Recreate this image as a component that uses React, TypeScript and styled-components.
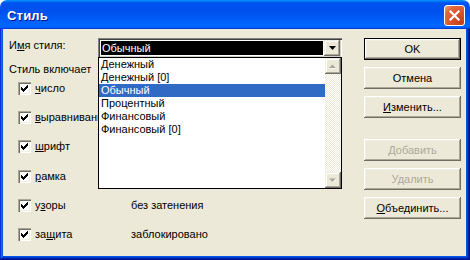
import React from 'react';
import styled, { createGlobalStyle } from 'styled-components';

const GlobalStyle = createGlobalStyle`
  html, body {
    margin: 0;
    padding: 0;
    background: #ffffff;
  }
  body {
    font-family: 'Liberation Sans', Arial, sans-serif;
    font-size: 11px;
    line-height: 13px;
    color: #000000;
  }
`;

const styleNames = [
  'Денежный',
  'Денежный [0]',
  'Обычный',
  'Процентный',
  'Финансовый',
  'Финансовый [0]',
];

type Option = {
  pre: string;
  key: string;
  post: string;
  value?: string;
};

// what the style includes: label with access key, and its value
const options: Option[] = [
  { pre: '', key: 'ч', post: 'исло' },
  { pre: '', key: 'в', post: 'ыравнивание' },
  { pre: '', key: 'ш', post: 'рифт' },
  { pre: '', key: 'р', post: 'амка' },
  { pre: 'у', key: 'з', post: 'оры', value: 'без затенения' },
  { pre: 'за', key: 'щ', post: 'ита', value: 'заблокировано' },
];

export default function App() {
  return (
    <>
      <GlobalStyle />
      <Window>
        <TitleBar>
          <Title>Стиль</Title>
          <CloseButton>
            <svg width="13" height="13" viewBox="0 0 13 13">
              <path d="M2.5 2.5 L10.5 10.5 M10.5 2.5 L2.5 10.5" stroke="#fff" strokeWidth="2.2" strokeLinecap="square" />
            </svg>
          </CloseButton>
        </TitleBar>
        <Frame>
          <Body>
            <LeftPane>
              <NameRow>
                <Label>
                  И<u>м</u>я стиля:
                </Label>
                <Combo>
                  <ComboText>
                    <Selected>Обычный</Selected>
                  </ComboText>
                  <DropButton>
                    <svg width="7" height="4" viewBox="0 0 7 4">
                      <path d="M0 0h7L3.5 4z" fill="#000" />
                    </svg>
                  </DropButton>
                </Combo>
              </NameRow>
              <SectionLabel>Стиль включает</SectionLabel>
              <CheckGrid>
                {options.map((o) => (
                  <React.Fragment key={o.key + o.post}>
                    <CheckBox>
                      <svg width="13" height="13" viewBox="0 0 13 13" shapeRendering="crispEdges">
                        <path
                          d="M9 3h1v1h-1z M8 4h2v1h-2z M3 5h1v1h-1z M7 5h3v1h-3z M3 6h2v1h-2z M6 6h3v1h-3z M3 7h5v1h-5z M4 8h3v1h-3z M5 9h1v1h-1z"
                          fill="#000"
                        />
                      </svg>
                    </CheckBox>
                    <CheckLabel>
                      {o.pre}
                      <u>{o.key}</u>
                      {o.post}
                    </CheckLabel>
                    <CheckValue>{o.value ?? ''}</CheckValue>
                  </React.Fragment>
                ))}
              </CheckGrid>
              <DropList>
                <Items>
                  {styleNames.map((name) => (
                    <Item key={name} active={name === 'Обычный'}>
                      {name}
                    </Item>
                  ))}
                </Items>
                <ScrollBar>
                  <ScrollButton>
                    <svg width="8" height="5" viewBox="0 0 8 5">
                      <path d="M1 4.5h7L4.5 1z" fill="#fff" />
                      <path d="M0 4h7L3.5 0.5z" fill="#ACA899" />
                    </svg>
                  </ScrollButton>
                  <Track />
                  <ScrollButton>
                    <svg width="8" height="5" viewBox="0 0 8 5">
                      <path d="M1 1h7L4.5 4.5z" fill="#fff" />
                      <path d="M0 0.5h7L3.5 4z" fill="#ACA899" />
                    </svg>
                  </ScrollButton>
                </ScrollBar>
              </DropList>
            </LeftPane>
            <Buttons>
              <Button isDefault>OK</Button>
              <Button>Отмена</Button>
              <Button>
                <u>И</u>зменить...
              </Button>
              <Button disabled gapTop>
                Добавить
              </Button>
              <Button disabled>Удалить</Button>
              <Button>
                <u>О</u>бъединить...
              </Button>
            </Buttons>
          </Body>
        </Frame>
      </Window>
    </>
  );
}

const Window = styled.div`
  width: 470px;
  height: 260px;
  display: flex;
  flex-direction: column;
`;

const TitleBar = styled.div`
  height: 29px;
  flex: none;
  display: flex;
  align-items: flex-start;
  padding: 0 5px 0 7px;
  box-sizing: border-box;
  border-radius: 7px 7px 0 0;
  background: linear-gradient(
    180deg,
    #0997ff,
    #0053ee 10%,
    #0050ee 40%,
    #0066ff 86%,
    #0066ff 92%,
    #005bff 95%,
    #003dd7 97%,
    #003dd7
  );
`;

const Title = styled.span`
  margin-top: 8px;
  font-family: 'Liberation Sans', Arial, sans-serif;
  font-weight: bold;
  font-size: 13px;
  line-height: 15px;
  color: #ffffff;
  text-shadow: 1px 1px #0f1089;
  letter-spacing: 0.2px;
`;

const CloseButton = styled.div`
  margin-left: auto;
  margin-top: 5px;
  width: 21px;
  height: 21px;
  box-sizing: border-box;
  border: 1px solid #ffffff;
  border-radius: 3px;
  display: flex;
  align-items: center;
  justify-content: center;
  background: radial-gradient(circle at 85% 85%, #c4401a 0%, #d9542d 45%, #e2683f 75%, #f2a585 100%);
`;

const Frame = styled.div`
  flex: 1;
  display: flex;
  padding: 0 4px 4px 3px;
  background: #0055e5;
  box-shadow: inset -1px -1px #00138c, inset 1px 0 #0831d9, inset -2px -2px #001ea0, inset 2px 0 #166aee,
    inset -3px -3px #003bda, inset 3px 0 #0855dd;
`;

const Body = styled.div`
  flex: 1;
  display: flex;
  gap: 22px;
  padding: 9px 5px 0 6px;
  background: #ece9d8;
`;

const LeftPane = styled.div`
  position: relative;
  width: 333px;
  display: flex;
  flex-direction: column;
`;

const NameRow = styled.div`
  display: flex;
  height: 20px;
`;

const Label = styled.div`
  width: 89px;
  padding-top: 1px;
  white-space: nowrap;
`;

const Combo = styled.div`
  width: 244px;
  height: 20px;
  box-sizing: border-box;
  padding: 2px;
  display: flex;
  background: #ffffff;
  box-shadow: inset 1px 1px #7f7f7f, inset 2px 2px #404040, inset -1px -1px #ffffff, inset -2px -2px #d4d0c8;
`;

const ComboText = styled.div`
  flex: 1;
  padding: 0 1px;
  display: flex;
  align-items: center;
`;

const Selected = styled.div`
  flex: 1;
  height: 14px;
  line-height: 14px;
  padding-left: 1px;
  background: #000000;
  color: #ffffff;
`;

const DropButton = styled.div`
  width: 16px;
  height: 16px;
  display: flex;
  align-items: center;
  justify-content: center;
  background: #ece9d8;
  box-shadow: inset -1px -1px #716f64, inset 1px 1px #f1efe2, inset -2px -2px #aca899, inset 2px 2px #ffffff;
`;

const SectionLabel = styled.div`
  margin-top: 5px;
  white-space: nowrap;
`;

const CheckGrid = styled.div`
  margin-top: 6px;
  padding-left: 9px;
  display: grid;
  grid-template-columns: 13px 92px auto;
  grid-auto-rows: 13px;
  column-gap: 4px;
  row-gap: 16.2px;
  align-items: center;
`;

const CheckBox = styled.span`
  width: 13px;
  height: 13px;
  display: block;
  background: #ffffff;
  box-shadow: inset 1px 1px #aca899, inset 2px 2px #716f64, inset -1px -1px #ffffff, inset -2px -2px #f1efe2;
  svg {
    display: block;
  }
`;

const CheckLabel = styled.span`
  white-space: nowrap;
`;

const CheckValue = styled.span`
  white-space: nowrap;
`;

// the open drop-down list lies over the labels below the combo box
const DropList = styled.div`
  position: absolute;
  left: 89px;
  top: 19px;
  width: 244px;
  height: 132px;
  box-sizing: border-box;
  border: 1px solid #000000;
  background: #ffffff;
  display: flex;
`;

const Items = styled.div`
  flex: 1;
  display: flex;
  flex-direction: column;
`;

const Item = styled.div<{ active?: boolean }>`
  height: 13px;
  line-height: 13px;
  padding-left: 2px;
  white-space: nowrap;
  background: ${(p) => (p.active ? '#316ac5' : 'transparent')};
  color: ${(p) => (p.active ? '#ffffff' : '#000000')};
`;

const ScrollBar = styled.div`
  width: 16px;
  display: flex;
  flex-direction: column;
`;

const ScrollButton = styled.div`
  width: 16px;
  height: 16px;
  flex: none;
  display: flex;
  align-items: center;
  justify-content: center;
  background: #ece9d8;
  box-shadow: inset -1px -1px #716f64, inset 1px 1px #f1efe2, inset -2px -2px #aca899, inset 2px 2px #ffffff;
`;

const Track = styled.div`
  flex: 1;
  background: repeating-conic-gradient(#ffffff 0 25%, #ece9d8 0 50%) 0 0 / 2px 2px;
`;

const Buttons = styled.div`
  width: 97px;
  display: flex;
  flex-direction: column;
  gap: 7px;
`;

const Button = styled.div<{ isDefault?: boolean; disabled?: boolean; gapTop?: boolean }>`
  height: 22px;
  box-sizing: border-box;
  display: flex;
  align-items: center;
  justify-content: center;
  white-space: nowrap;
  margin-top: ${(p) => (p.gapTop ? '14px' : '0')};
  color: ${(p) => (p.disabled ? '#aca899' : '#000000')};
  background: #ece9d8;
  border: ${(p) => (p.isDefault ? '1px solid #000000' : 'none')};
  box-shadow: inset -1px -1px #716f64, inset 1px 1px #ffffff, inset -2px -2px #aca899, inset 2px 2px #f1efe2;
`;
